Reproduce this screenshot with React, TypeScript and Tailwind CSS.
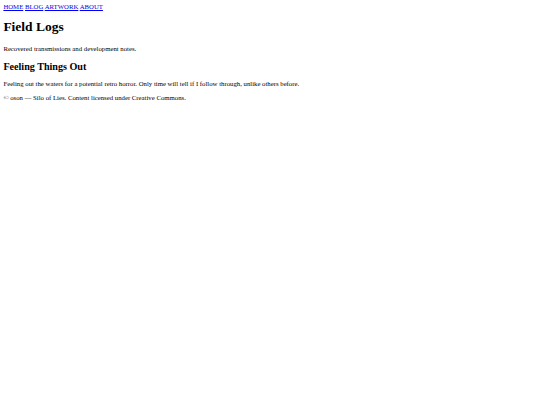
import React from 'react';

const links = ['HOME', 'BLOG', 'ARTWORK', 'ABOUT'];

export default function App() {
  return (
    <div className="min-h-[405px] bg-white p-[3.375px] font-['Liberation_Serif',serif] text-[6.75px] leading-[normal] text-black">
      <nav>
        {links.map((label, i) => (
          <React.Fragment key={label}>
            <a href="#" className="text-[#0000ee] underline">
              {label}
            </a>
            {i < links.length - 1 && ' '}
          </React.Fragment>
        ))}
      </nav>
      <main>
        <h1 className="mt-[9.045px] mb-[10px] text-[13.5px] font-bold leading-[normal]">Field Logs</h1>
        <p className="my-[6.75px]">Recovered transmissions and development notes.</p>
        <article>
          <h2 className="my-[8.4px] text-[10.125px] font-bold leading-[normal]">Feeling Things Out</h2>
          <p className="my-[6.75px]">
            Feeling out the waters for a potential retro horror. Only time will tell if I follow through, unlike others before.
          </p>
        </article>
      </main>
      <footer>
        <p className="my-[6.75px]">© oson — Silo of Lies. Content licensed under Creative Commons.</p>
      </footer>
    </div>
  );
}
